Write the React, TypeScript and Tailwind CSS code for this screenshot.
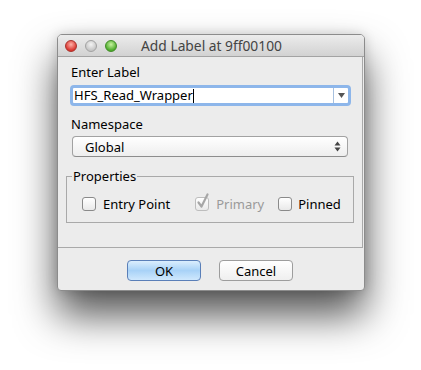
import React from "react";

const font = { fontFamily: '"Noto Sans", "Open Sans", sans-serif' };

function Light({ from, to, border }: { from: string; to: string; border: string }) {
  return (
    <div
      className="w-[12px] h-[12px] rounded-full border"
      style={{
        background: `radial-gradient(circle at 50% 35%, ${from} 0%, ${to} 70%)`,
        borderColor: border,
      }}
    />
  );
}

function Box({ checked = false, disabled = false }: { checked?: boolean; disabled?: boolean }) {
  return (
    <div className="relative w-[14px] h-[14px] shrink-0">
      <div
        className={
          "w-[14px] h-[14px] rounded-[3px] border bg-gradient-to-b from-white to-[#e9e9e9] " +
          (disabled ? "border-[#bdbdbd]" : "border-[#8a8a8a]")
        }
      />
      {checked && (
        <svg className="absolute left-[1px] -top-[4px]" width="14" height="16" viewBox="0 0 14 16">
          <path d="M2.5 9.5 L5.5 13.5 L11.5 1.5" fill="none" stroke="#a6a6a6" strokeWidth="2.2" strokeLinecap="round" strokeLinejoin="round" />
        </svg>
      )}
    </div>
  );
}

export default function App() {
  return (
    <div className="w-[421px] h-[370px] bg-white pt-[34px] pl-[57px]" style={font}>
      <div className="w-[308px] h-[257px] rounded-t-[5px] rounded-b-[4px] border border-[#8c8c8c] bg-[#ececec] shadow-[0_24px_40px_rgba(0,0,0,0.68),0_0_12px_rgba(0,0,0,0.15)] flex flex-col overflow-hidden">
        {/* Title bar */}
        <div className="relative h-[22px] shrink-0 border-b border-[#a3a3a3] bg-gradient-to-b from-[#ececec] to-[#d2d2d2] flex items-center justify-center">
          <div className="absolute left-[7px] top-[5px] flex gap-[8px]">
            <Light from="#ffb1a8" to="#d9362f" border="#a8302a" />
            <Light from="#f4f4f4" to="#c6c6c6" border="#a2a2a2" />
            <Light from="#c7f3a0" to="#4dab2c" border="#3f8b25" />
          </div>
          <span className="text-[13.8px] leading-[16px] text-[#444] pl-[1px]">Add Label at 9ff00100</span>
        </div>

        {/* Panel */}
        <div className="h-[191px] shrink-0 border-b border-r border-[#a9a9a9] mr-[1px] pt-[7px] flex flex-col">
          <div className="ml-[13px] text-[13px] leading-[16px] text-black">Enter Label</div>
          <div className="ml-[12px] mt-[5px] w-[281px] h-[21px] rounded-[4px] border-[3px] border-[#8db6ea] bg-white flex items-stretch">
            <div className="flex-1 flex items-center pl-[1px] text-[13px] leading-[15px] text-black">
              <span>HFS_Read_Wrapper</span>
              <span className="w-px h-[14px] bg-black" />
            </div>
            <div className="w-[15px] border-l border-[#a7c0df] flex items-center justify-center">
              <svg width="7" height="5" viewBox="0 0 7 5">
                <path d="M0 0 L7 0 L3.5 5 Z" fill="#555" />
              </svg>
            </div>
          </div>

          <div className="ml-[13px] mt-[10px] text-[13px] leading-[16px] text-black">Namespace</div>
          <div className="ml-[14px] mt-[4px] w-[276px] h-[21px] rounded-[4px] border border-[#a2a2a2] border-b-[#8d8d8d] bg-gradient-to-b from-white to-[#eeeeee] flex items-center pl-[12px] pr-[6px]">
            <span className="flex-1 text-[13px] leading-[16px] text-black">Global</span>
            <svg width="7" height="11" viewBox="0 0 7 11">
              <path d="M0.5 4.5 L6.5 4.5 L3.5 0.5 Z" fill="#444" />
              <path d="M0.5 6.5 L6.5 6.5 L3.5 10.5 Z" fill="#444" />
            </svg>
          </div>

          <div className="relative ml-[8px] mt-[19px] w-[288px] h-[47px] border border-[#a9a9a9]">
            <span className="absolute left-[5px] -top-[9px] px-[1px] bg-[#ececec] text-[13px] leading-[16px] text-black">
              Properties
            </span>
            <div className="flex items-center h-full pt-[9px] text-[13px] leading-[16px]">
              <div className="ml-[15px] flex items-center gap-[7px]">
                <Box />
                <span className="text-black">Entry Point</span>
              </div>
              <div className="ml-[25px] flex items-center gap-[7px]">
                <Box checked disabled />
                <span className="text-[#9a9a9a]">Primary</span>
              </div>
              <div className="ml-[14px] flex items-center gap-[6px]">
                <Box />
                <span className="text-black">Pinned</span>
              </div>
            </div>
          </div>
        </div>

        {/* Footer */}
        <div className="flex-1 flex justify-center gap-[18px] pt-[12px] pr-[2px]">
          <button className="w-[74px] h-[21px] rounded-[4px] border border-[#5a7fb8] bg-gradient-to-b from-[#dbeefd] via-[#a8d2f7] to-[#cfe8fd] text-[13px] leading-[16px] text-black">
            OK
          </button>
          <button className="w-[74px] h-[21px] rounded-[4px] border border-[#9d9d9d] bg-gradient-to-b from-white to-[#efefef] text-[13px] leading-[16px] text-black">
            Cancel
          </button>
        </div>
      </div>
    </div>
  );
}
